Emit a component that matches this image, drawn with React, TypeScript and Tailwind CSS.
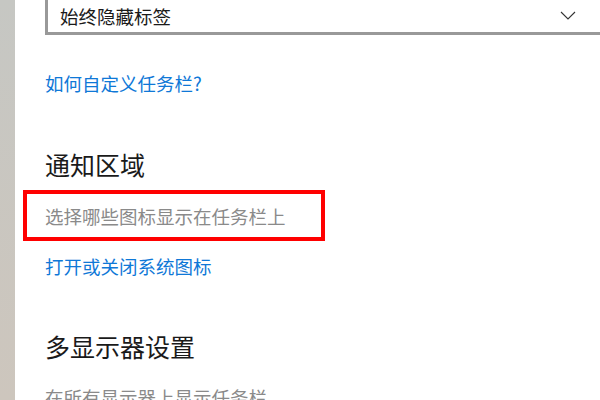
export default function App() {
  return (
    <div className="w-[600px] h-[400px] overflow-hidden bg-white flex font-['Noto_Sans_CJK_SC','Noto_Sans',sans-serif]">
      {/* left gray strip */}
      <div className="w-[15px] shrink-0 bg-gradient-to-b from-[#c6c7c3] to-[#cdc6bd]" />

      <div className="flex-1 pl-[30px] flex flex-col">
        {/* dropdown (top is cut off) */}
        <div className="w-[570px] h-[35px] shrink-0 border-l-[3px] border-r-[3px] border-b-[3px] border-[#999999] flex items-center justify-between pl-[12px] pr-[36px]">
          <span className="text-[18.5px] leading-[28px] text-[#1a1a1a]">始终隐藏标签</span>
          <svg width="16" height="9" viewBox="0 0 16 9" className="mb-[2px]">
            <path d="M1 1 L8 8 L15 1" fill="none" stroke="#333" strokeWidth="1.1" />
          </svg>
        </div>

        <a className="mt-[34px] text-[18.5px] leading-[28px] text-[#0f78d7]">如何自定义任务栏?</a>

        <h2 className="mt-[50px] text-[25px] leading-[34px] text-[#1a1a1a]">通知区域</h2>

        <div className="relative mt-[21px]">
          <div className="absolute left-[-22px] top-[-12px] w-[302px] h-[51px] border-[4px] border-[#ff0000]" />
          <p className="text-[18.5px] leading-[28px] text-[#8a8a8a]">选择哪些图标显示在任务栏上</p>
        </div>

        <a className="mt-[22px] text-[18.5px] leading-[28px] text-[#0f78d7]">打开或关闭系统图标</a>

        <h2 className="mt-[49px] text-[25px] leading-[34px] text-[#1a1a1a]">多显示器设置</h2>

        <p className="mt-[20px] text-[18.5px] leading-[28px] text-[#8a8a8a]">在所有显示器上显示任务栏</p>
      </div>
    </div>
  );
}
